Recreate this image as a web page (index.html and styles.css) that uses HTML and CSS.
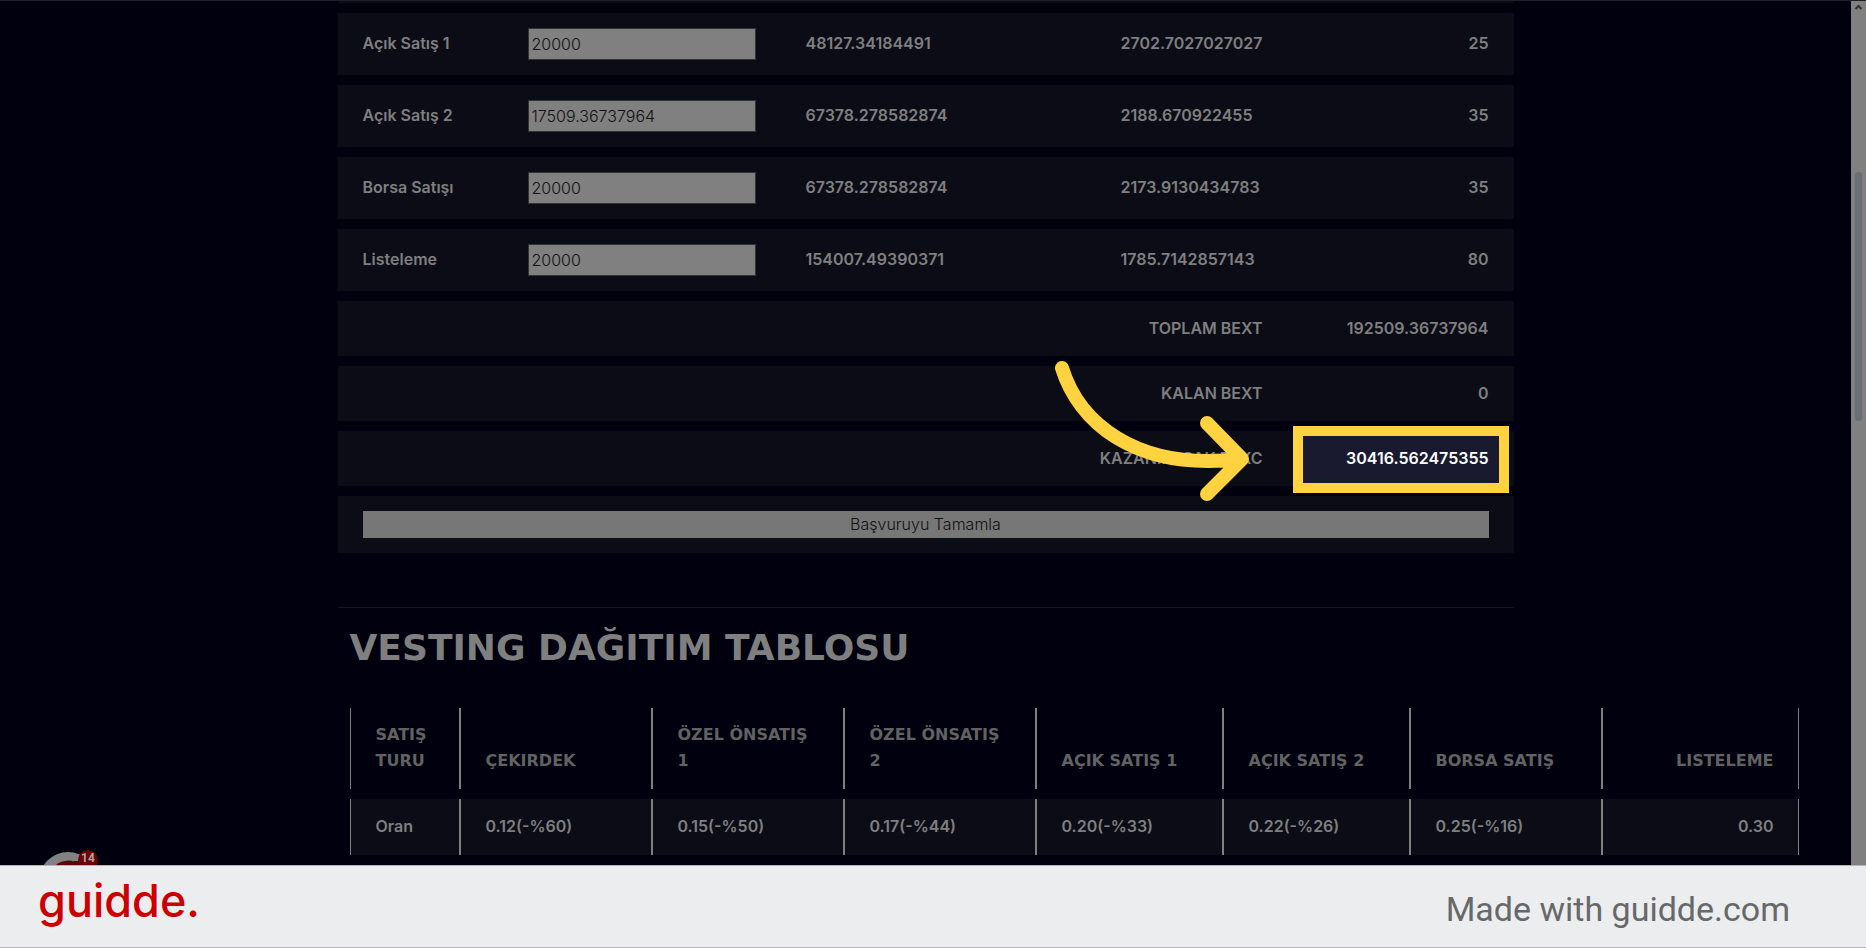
FILE: index.html
```html
<!DOCTYPE html>
<html lang="tr">
<head>
<meta charset="utf-8">
<title>Vesting Dağıtım Tablosu</title>
<link rel="stylesheet" href="styles.css">
</head>
<body>
<div class="screen">
  <main class="page">
    <div class="container">
      <div class="previous-row"></div>
      <table class="sales">
        <colgroup><col class="c-name"><col class="c-amount"><col class="c-total"><col class="c-rate"><col></colgroup>
        <tbody>
          <tr><td><label for="a1">Açık Satış 1</label></td><td class="field"><input id="a1" type="text" value="20000"></td><td>48127.34184491</td><td>2702.7027027027</td><td class="end">25</td></tr>
          <tr><td><label for="a2">Açık Satış 2</label></td><td class="field"><input id="a2" type="text" value="17509.36737964"></td><td>67378.278582874</td><td>2188.670922455</td><td class="end">35</td></tr>
          <tr><td><label for="a3">Borsa Satışı</label></td><td class="field"><input id="a3" type="text" value="20000"></td><td>67378.278582874</td><td>2173.9130434783</td><td class="end">35</td></tr>
          <tr><td><label for="a4">Listeleme</label></td><td class="field"><input id="a4" type="text" value="20000"></td><td>154007.49390371</td><td>1785.7142857143</td><td class="end">80</td></tr>
          <tr class="sum"><td colspan="4" class="end">TOPLAM BEXT</td><td class="end">192509.36737964</td></tr>
          <tr class="sum"><td colspan="4" class="end">KALAN BEXT</td><td class="end">0</td></tr>
          <tr class="sum"><td colspan="4" class="end">KAZANILACAK BEXC</td><td class="end spot">
            <span class="spot-box"></span><span class="spot-value">30416.562475355</span>
            <svg class="spot-arrow" width="200" height="145" viewBox="0 0 200 145" aria-hidden="true"><path d="M12 8C28 60 83 112 191 99M157 63L192 99L157 134"/></svg>
          </td></tr>
          <tr><td colspan="5" class="field"><button type="button" class="submit">Başvuruyu Tamamla</button></td></tr>
        </tbody>
      </table>
      <hr class="rule">
      <section class="vesting">
        <h2>VESTING DAĞITIM TABLOSU</h2>
        <table class="rounds">
          <colgroup><col class="r-name"><col class="r-wide"><col class="r-wide"><col class="r-wide"><col class="r-mid"><col class="r-mid"><col class="r-wide"><col></colgroup>
          <thead><tr><th>SATIŞ TURU</th><th>ÇEKIRDEK</th><th>ÖZEL ÖNSATIŞ<br>1</th><th>ÖZEL ÖNSATIŞ<br>2</th><th>AÇIK SATIŞ 1</th><th>AÇIK SATIŞ 2</th><th>BORSA SATIŞ</th><th class="end">LISTELEME</th></tr></thead>
          <tbody><tr><td>Oran</td><td>0.12(-%60)</td><td>0.15(-%50)</td><td>0.17(-%44)</td><td>0.20(-%33)</td><td>0.22(-%26)</td><td>0.25(-%16)</td><td class="end">0.30</td></tr></tbody>
        </table>
      </section>
    </div>
  </main>
  <div class="scrollbar">
    <svg width="15" height="14" viewBox="0 0 15 14" aria-hidden="true"><path d="M4.500 9L7.500 6L10.500 9"/></svg>
    <div class="thumb"></div>
  </div>
  <div class="launcher">
    <svg width="58" height="58" viewBox="0 0 58 58" aria-hidden="true"><circle cx="29" cy="29" r="29" fill="#828282"/><path d="M39 16A15 15 0 1 0 41 36" fill="none" stroke="#650008" stroke-width="7"/><path d="M35 9h5v10h-5z" fill="#650008"/></svg>
    <span class="count">14</span>
  </div>
</div>
<footer class="brandbar">
  <span class="logo">guidde.</span>
  <span class="made">Made with guidde.com</span>
</footer>
</body>
</html>
```
FILE: styles.css
```css
* { box-sizing: border-box; }
body {
  margin: 0;
  height: 100vh;
  display: flex;
  flex-direction: column;
  overflow: hidden;
  background: #00000e;
  color: #7f7f7f;
  font: 600 16px/26px Inter, sans-serif;
}
.screen {
  position: relative;
  flex: 1;
  min-height: 0;
  display: flex;
  overflow: hidden;
}
.screen::before {
  content: "";
  position: absolute;
  inset: 0 0 auto;
  height: 1px;
  background: #1e1e27;
}
.page { flex: 1; min-width: 0; }
.container { max-width: 1176px; margin: 0 auto; }
.previous-row { height: 3px; background: #0c0c17; }
table { table-layout: fixed; border-collapse: separate; border-spacing: 0 10px; }
td, th { padding: 14px 25px 16px; text-align: left; }
td { background: #0c0c17; }
.field { padding-block: 15px; }
.end { text-align: right; }

.sales { width: 100%; }
.c-name { width: 165px; }
.c-amount { width: 278px; }
.c-total { width: 315px; }
.c-rate { width: 192px; }
.sum td { height: 55px; padding-block: 14px 15px; }
input {
  display: block;
  width: 100%;
  height: 32px;
  padding: 0 3px 1px;
  border: 1px solid #333;
  background: #808080;
  color: #111;
  font: 300 16px/29px Inter, sans-serif;
}
.submit {
  display: block;
  width: 100%;
  height: 27px;
  padding: 0;
  border: 0;
  background: #777;
  color: #111;
  font: 300 16px/27px Inter, sans-serif;
}
.spot { position: relative; }
.spot-box {
  position: absolute;
  inset: -5px 5px -7px;
  border: 10px solid #ffd23f;
  background: #191930;
}
.spot-value { position: relative; color: #fff; }
.spot-arrow { position: absolute; left: -238px; top: -71px; }
.spot-arrow path {
  fill: none;
  stroke: #ffd23f;
  stroke-width: 14;
  stroke-linecap: round;
  stroke-linejoin: round;
}

.rule { height: 1px; margin: 44px 0 0; border: 0; background: #171724; }
.vesting { padding: 20px 12px 0; }
h2 {
  margin: 0;
  height: 70px;
  font: 700 36px/40px "DejaVu Sans", sans-serif;
  white-space: nowrap;
}
.rounds { width: 1449px; }
.rounds th, .rounds td {
  padding-left: 25px;
  padding-right: 24px;
  border: solid #7f7f7f;
  border-width: 0 1px;
}
.rounds th {
  padding-bottom: 15px;
  vertical-align: bottom;
  color: #626262;
  font: 700 16px/26px "DejaVu Sans", sans-serif;
}
.r-name { width: 110px; }
.r-wide { width: 192px; }
.r-mid { width: 187px; }

.scrollbar { width: 15px; background: #808080; }
.scrollbar svg { display: block; }
.scrollbar path { fill: none; stroke: #303030; stroke-width: 2; }
.thumb { width: 7px; height: 249px; margin: 158px 4px 0; border-radius: 3px; background: #697075; }

.launcher { position: absolute; left: 39px; top: 852px; width: 60px; }
.launcher svg { display: block; }
.count {
  position: absolute;
  left: 39px;
  top: -2px;
  width: 20px;
  height: 20px;
  border-radius: 10px;
  background: #6b0006;
  color: #b3a3a3;
  font: 700 12px/16px Roboto, sans-serif;
  text-align: center;
}

.brandbar {
  display: flex;
  align-items: center;
  justify-content: space-between;
  height: 83px;
  padding: 0 76px 0 38px;
  border: solid #b4b4ba;
  border-width: 1px 0;
  background: #ecedef;
}
.logo { padding-bottom: 12px; color: #c00; font: 500 45px/60px Inter, sans-serif; }
.made { padding-top: 4px; color: #66686a; font: 400 34px/44px Roboto, sans-serif; }
```
